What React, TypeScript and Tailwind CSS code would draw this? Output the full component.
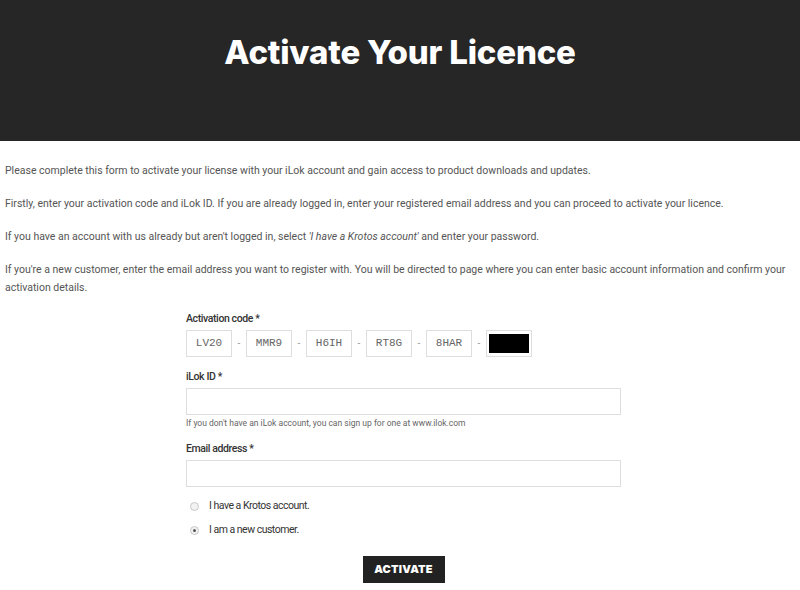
import React from "react";

const codes = ["LV20", "MMR9", "H6IH", "RT8G", "8HAR"];

function Radio({ checked, label }: { checked?: boolean; label: string }) {
  return (
    <div className="flex items-center h-[16px]">
      <span className="ml-[4px] w-[9px] h-[9px] rounded-full border border-[#c8c8c8] bg-[#f2f2f2] flex items-center justify-center">
        {checked && <span className="w-[3px] h-[3px] rounded-full bg-[#555]" />}
      </span>
      <span className="ml-[10px] text-[10.5px] text-[#333] tracking-[-0.5px]">{label}</span>
    </div>
  );
}

export default function App() {
  return (
    <div className="w-[800px] h-[590px] bg-white overflow-hidden font-['Roboto',sans-serif]">
      <header className="h-[141px] bg-[#262626] flex justify-center pt-[31px]">
        <h1 className="font-['Inter',sans-serif] font-extrabold text-white text-[33px] leading-[42px] tracking-[-0.2px]">
          Activate Your Licence
        </h1>
      </header>

      <div className="px-[5px] pt-[21px] text-[10.5px] leading-[18px] text-[#555] space-y-[15px]">
        <p>Please complete this form to activate your license with your iLok account and gain access to product downloads and updates.</p>
        <p>Firstly, enter your activation code and iLok ID. If you are already logged in, enter your registered email address and you can proceed to activate your licence.</p>
        <p>
          If you have an account with us already but aren't logged in, select <em>'I have a Krotos account'</em> and enter your password.
        </p>
        <p>
          If you're a new customer, enter the email address you want to register with. You will be directed to page where you can enter basic account information and confirm your activation details.
        </p>
      </div>

      <form className="ml-[186px] w-[435px] mt-[14px]">
        <label className="block text-[10.5px] leading-[16px] font-medium text-[#333] tracking-[-0.4px] mb-[3px]">
          Activation code *
        </label>
        <div className="flex items-center">
          {codes.map((c) => (
            <React.Fragment key={c}>
              <div className="w-[46px] h-[27px] border border-[#dedede] flex items-center justify-center font-['Liberation_Mono',monospace] text-[11px] text-[#666]">
                {c}
              </div>
              <span className="w-[14px] text-center text-[10px] text-[#999]">-</span>
            </React.Fragment>
          ))}
          <div className="w-[46px] h-[27px] border border-[#dedede] flex items-center justify-center">
            <div className="w-[40px] h-[19px] bg-black" />
          </div>
        </div>

        <label className="block mt-[12px] text-[10.5px] leading-[16px] font-medium text-[#333] tracking-[-0.4px] mb-[3px]">
          iLok ID *
        </label>
        <input className="block w-[435px] h-[27px] border border-[#dedede] outline-none" />
        <p className="mt-[2px] text-[8.5px] leading-[12px] text-[#666]">
          If you don't have an iLok account, you can sign up for one at www.ilok.com
        </p>

        <label className="block mt-[12px] text-[10.5px] leading-[16px] font-medium text-[#333] tracking-[-0.4px] mb-[3px]">
          Email address *
        </label>
        <input className="block w-[435px] h-[27px] border border-[#dedede] outline-none" />

        <div className="mt-[11px] flex flex-col gap-[8px]">
          <Radio label="I have a Krotos account." />
          <Radio checked label="I am a new customer." />
        </div>

        <div className="flex justify-center mt-[18px]">
          <button
            type="button"
            className="w-[82px] h-[27px] bg-[#222] text-white font-['Inter',sans-serif] font-black text-[11px] tracking-[0.2px]"
          >
            ACTIVATE
          </button>
        </div>
      </form>
    </div>
  );
}
